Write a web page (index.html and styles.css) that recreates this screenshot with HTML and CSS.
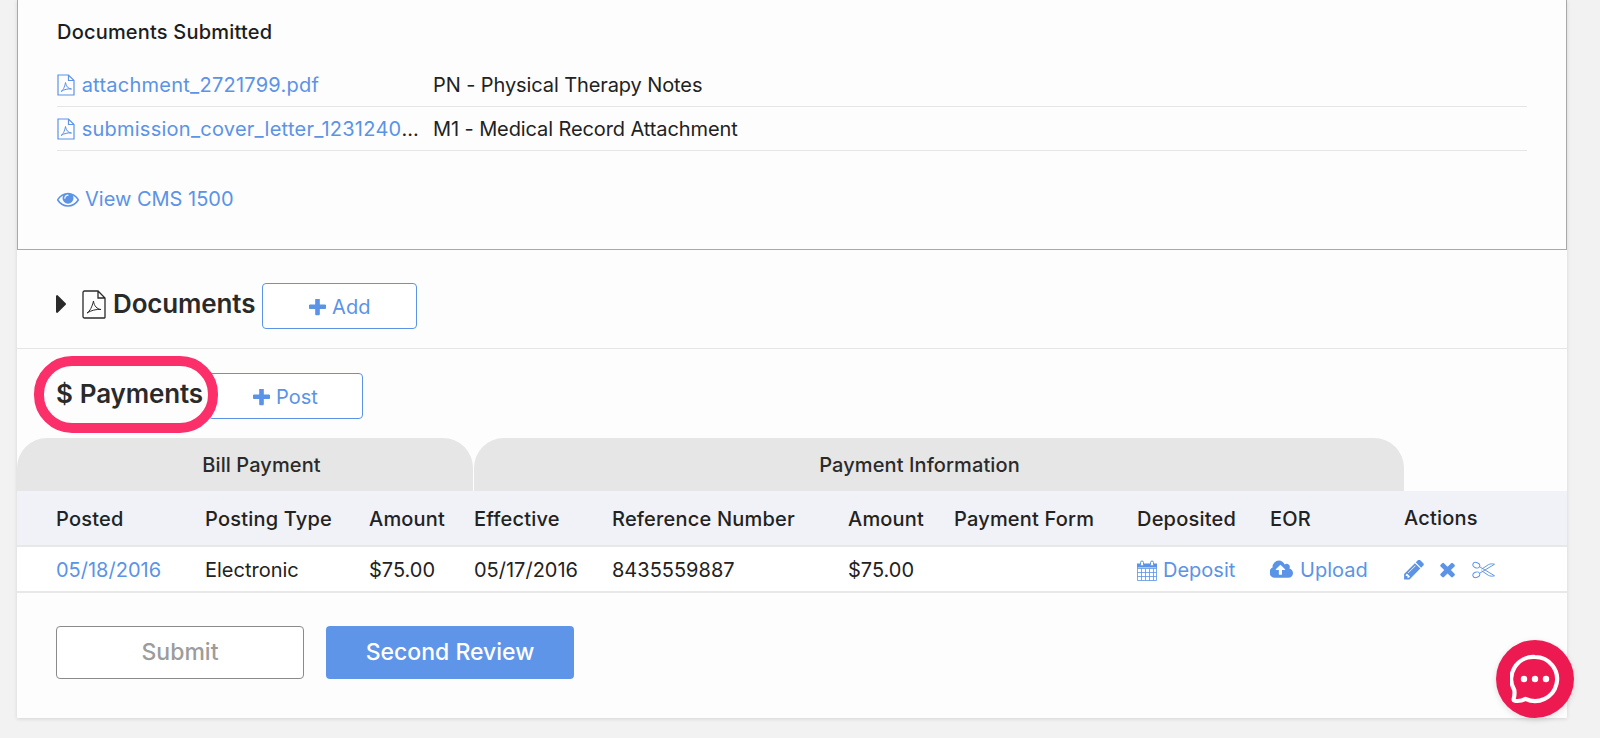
FILE: index.html
```html
<!DOCTYPE html>
<html lang="en">
<head>
<meta charset="utf-8">
<title>Claim</title>
<link rel="stylesheet" href="styles.css">
</head>
<body>
<main class="card">
  <section class="submitted">
    <h3 class="sub-title">Documents Submitted</h3>
    <div class="doc-row">
      <div class="doc-file">
        <svg class="ico-file" viewBox="0 0 18 22"><path d="M1 1h10.500L17 6.500V21H1z M11.500 1v5.500H17" fill="none" stroke="currentColor" stroke-width="1.200"/><path d="M4 17.500c2-1 3.500-4 4.500-9 .5 4 2.500 6 6 6.500-3.500-.5-7.500.5-10.500 2.500z" fill="none" stroke="currentColor" stroke-width="1"/></svg>
        <a class="link file-name">attachment_2721799.pdf</a>
      </div>
      <div class="doc-type">PN - Physical Therapy Notes</div>
    </div>
    <div class="doc-row">
      <div class="doc-file">
        <svg class="ico-file" viewBox="0 0 18 22"><path d="M1 1h10.500L17 6.500V21H1z M11.500 1v5.500H17" fill="none" stroke="currentColor" stroke-width="1.200"/><path d="M4 17.500c2-1 3.500-4 4.500-9 .5 4 2.500 6 6 6.500-3.500-.5-7.500.5-10.500 2.500z" fill="none" stroke="currentColor" stroke-width="1"/></svg>
        <a class="link file-name">submission_cover_letter_1231240</a>...
      </div>
      <div class="doc-type">M1 - Medical Record Attachment</div>
    </div>
    <a class="link view-cms">
      <svg class="ico-eye" viewBox="0 0 1792 1792"><path fill="currentColor" d="M1664 960q-152-236-381-353 61 104 61 225 0 185-131.500 316.500t-316.500 131.500-316.500-131.500-131.500-316.500q0-121 61-225-229 117-381 353 133 205 333.500 326.500t434.500 121.500 434.500-121.500 333.500-326.500zm-720-384q0-20-14-34t-34-14q-125 0-214.500 89.500t-89.500 214.500q0 20 14 34t34 14 34-14 14-34q0-86 61-147t147-61q20 0 34-14t14-34zm848 384q0 34-20 69-140 230-376.500 368.500t-499.500 138.500-499.500-139-376.500-368q-20-35-20-69t20-69q140-229 376.500-368t499.500-139 499.500 139 376.500 368q20 35 20 69z"/></svg>
      View CMS 1500
    </a>
  </section>

  <section class="documents">
    <div class="heading docs-heading">
      <svg class="ico-caret" viewBox="576 384 576 1024"><path fill="currentColor" d="M1152 896q0 26-19 45l-448 448q-19 19-45 19t-45-19-19-45v-896q0-26 19-45t45-19 45 19l448 448q19 19 19 45z"/></svg>
      <svg class="ico-file-lg" viewBox="0 0 24 29"><path d="M1 2.500A1.500 1.500 0 0 1 2.500 1H16l7 7v19.500a.5.500 0 0 1-.5.500H2.500A1.500 1.500 0 0 1 1 26.500z M16 1v7h7" fill="none" stroke="currentColor" stroke-width="1.300"/><path d="M5 23c3-2 5-6 6.500-12 .5 5 3.500 8 7.500 8.500-5-.5-10 1-14 3.500z" fill="none" stroke="currentColor" stroke-width="1"/></svg>
      <h2 class="heading-text">Documents</h2>
    </div>
    <button class="btn-outline btn-add">
      <svg class="ico-plus" viewBox="192 192 1408 1408"><path fill="currentColor" d="M1600 736v192q0 40-28 68t-68 28h-416v416q0 40-28 68t-68 28h-192q-40 0-68-28t-28-68v-416h-416q-40 0-68-28t-28-68v-192q0-40 28-68t68-28h416v-416q0-40 28-68t68-28h192q40 0 68 28t28 68v416h416q40 0 68 28t28 68z"/></svg>
      Add
    </button>
  </section>

  <section class="payments">
    <div class="heading pay-heading">
      <h2 class="heading-text"><span class="dollar">$</span>Payments</h2>
    </div>
    <button class="btn-outline btn-post">
      <svg class="ico-plus" viewBox="192 192 1408 1408"><path fill="currentColor" d="M1600 736v192q0 40-28 68t-68 28h-416v416q0 40-28 68t-68 28h-192q-40 0-68-28t-28-68v-416h-416q-40 0-68-28t-28-68v-192q0-40 28-68t68-28h416v-416q0-40 28-68t68-28h192q40 0 68 28t28 68v416h416q40 0 68 28t28 68z"/></svg>
      Post
    </button>
    <div class="highlight"></div>
  </section>

  <div class="tabs">
    <div class="tab tab-bill">Bill Payment</div>
    <div class="tab tab-info">Payment Information</div>
  </div>
  <div class="grid-row head-row">
    <div>Posted</div><div>Posting Type</div><div>Amount</div><div>Effective</div><div>Reference Number</div><div>Amount</div><div>Payment Form</div><div>Deposited</div><div>EOR</div><div class="actions-head">Actions</div>
  </div>
  <div class="grid-row data-row">
    <div class="link">05/18/2016</div>
    <div>Electronic</div>
    <div>$75.00</div>
    <div>05/17/2016</div>
    <div>8435559887</div>
    <div>$75.00</div>
    <div></div>
    <div class="link with-ico">
      <svg class="ico-cal" viewBox="0 0 20 21"><path d="M.5 4.500h19v16H.5z M.5 8.500h19 M.5 12.500h19 M.5 16.500h19 M4.500 8.500v12 M8.500 8.500v12 M12.500 8.500v12 M16.500 8.500v12" fill="none" stroke="currentColor" stroke-width=".8"/><path d="M0 3.500h20v4H0z" fill="currentColor"/><rect x="3.500" y="1" width="3" height="5" rx="1.500" fill="#fff" stroke="currentColor"/><rect x="13.500" y="1" width="3" height="5" rx="1.500" fill="#fff" stroke="currentColor"/></svg>
      Deposit
    </div>
    <div class="link with-ico">
      <svg class="ico-cloud" viewBox="0 0 1920 1792"><path fill="currentColor" d="M1216 864q0-14-9-23l-352-352q-9-9-23-9t-23 9l-351 351q-10 12-10 24 0 14 9 23t23 9h224v352q0 13 9.500 22.500t22.500 9.500h192q13 0 22.500-9.500t9.500-22.500v-352h224q13 0 22.500-9.500t9.500-22.500zm640 288q0 159-112.500 271.500t-271.500 112.500h-1088q-185 0-316.500-131.500t-131.500-316.500q0-130 70-240t188-165q-2-30-2-43 0-212 150-362t362-150q156 0 285.500 87t188.500 231q71-62 166-62 106 0 181 75t75 181q0 76-41 138 130 31 213.500 135.500t83.500 238.500z"/></svg>
      Upload
    </div>
    <div class="link action-icons">
      <svg class="ico-pencil" viewBox="120 170 1540 1540"><path fill="currentColor" d="M491 1536l91-91-235-235-91 91v107h128v128h107zm523-928q0-22-22-22-10 0-17 7l-542 542q-7 7-7 17 0 22 22 22 10 0 17-7l542-542q7-7 7-17zm-54-192l416 416-832 832h-416v-416zm683 96q0 53-37 90l-166 166-416-416 166-165q36-38 90-38 53 0 91 38l235 234q37 39 37 91z"/></svg>
      <svg class="ico-times" viewBox="200 300 1300 1300"><path fill="currentColor" d="M1490 1322q0 40-28 68l-136 136q-28 28-68 28t-68-28l-294-294-294 294q-28 28-68 28t-68-28l-136-136q-28-28-28-68t28-68l294-294-294-294q-28-28-28-68t28-68l136-136q28-28 68-28t68 28l294 294 294-294q28-28 68-28t68 28l136 136q28 28 28 68t-28 68l-294 294 294 294q28 28 28 68z"/></svg>
      <svg class="ico-scissors" viewBox="0 0 24 18"><g fill="none" stroke="currentColor" stroke-width="1"><ellipse cx="4.500" cy="4" rx="3.700" ry="2.800" transform="rotate(20 4.500 4)"/><ellipse cx="4.500" cy="14" rx="3.700" ry="2.800" transform="rotate(-20 4.500 14)"/><path d="M7.800 5.500l15.700 9.500c-2.500.8-4.500.5-6.500-.5L10 9.800 M7.800 12.500l15.700-9.500c-2.500-.8-4.500-.5-6.500.5L10 8.200"/></g></svg>
    </div>
  </div>
  <div class="footer">
    <button class="btn-submit">Submit</button>
    <button class="btn-review">Second Review</button>
  </div>
</main>
<div class="fab">
  <svg class="ico-chat" viewBox="0 0 50 50"><path d="M25 3a22 22 0 1 1-9.500 41.800c-3 1.800-7 2.500-10.500 2 -1-.2-1.500-1-1.300-2 .8-2.800 1-6 .6-8.800A22 22 0 0 1 25 3z" fill="none" stroke="#fff" stroke-width="4.200" stroke-linejoin="round"/><circle cx="14" cy="25" r="3.200" fill="#fff"/><circle cx="25" cy="25" r="3.200" fill="#fff"/><circle cx="36" cy="25" r="3.200" fill="#fff"/></svg>
</div>
</body>
</html>
```
FILE: styles.css
```css
* { box-sizing: border-box; }
html, body { margin: 0; height: 738px; overflow: hidden; }
body {
  background: #f2f2f2;
  font-family: Inter, "Liberation Sans", sans-serif;
  font-size: 20px;
  color: #222;
  position: relative;
}
h2, h3 { margin: 0; }
.link { color: #5b93e6; }

.card {
  margin-left: 17px;
  width: 1550px;
  height: 718px;
  background: #fdfdfd;
  box-shadow: 0 1px 4px rgba(0,0,0,.12);
}

.submitted {
  height: 250px;
  padding: 19px 39px 0 39px;
  border: 1px solid #a9a9a9;
  border-top: 0;
}
.sub-title { font-size: 20px; line-height: 26px; font-weight: 500; color: #1d1d1d; letter-spacing: .2px; margin-bottom: 18px; }
.doc-row {
  display: flex;
  height: 44px;
  padding-top: 9px;
  border-bottom: 1px solid #e6e6e6;
  line-height: 26px;
}
.doc-file {
  width: 366px;
  margin-right: 10px;
  white-space: nowrap;
}
.doc-type { letter-spacing: -.1px; }
.file-name { letter-spacing: .25px; }
.ico-file { width: 18px; height: 22px; color: #5b93e6; vertical-align: -4px; margin-right: 1px; }
.view-cms { display: flex; align-items: center; gap: 6px; margin-top: 35px; line-height: 26px; }
.ico-eye { width: 22px; height: 22px; }

.documents {
  position: relative;
  height: 99px;
  display: flex;
  align-items: flex-start;
  padding-top: 33px;
  padding-left: 39px;
  border-bottom: 1px solid #e6e6e6;
}
.heading { display: flex; align-items: center; padding-top: 2px; color: #2a2a2a; }
.docs-heading { height: 40px; }
.heading-text { font-size: 26px; font-weight: 600; letter-spacing: -.15px; line-height: 40px; white-space: nowrap; }
.ico-caret { width: 10px; height: 18px; margin-right: 16px; }
.ico-file-lg { width: 24px; height: 29px; margin-right: 7px; }
.btn-outline {
  display: flex;
  align-items: center;
  justify-content: center;
  gap: 6px;
  width: 155px;
  height: 46px;
  padding: 2px 0 0;
  background: #fff;
  border: 1px solid #5b93e6;
  border-radius: 4px;
  color: #5b93e6;
  font: inherit;
}
.btn-add { margin-left: 7px; }
.ico-plus { width: 17px; height: 17px; }

.payments {
  position: relative;
  height: 89px;
  display: flex;
  align-items: flex-start;
  padding-top: 24px;
  padding-left: 39px;
}
.pay-heading { height: 40px; width: 152px; }
.dollar { margin-right: 7px; }
.highlight {
  position: absolute;
  left: 17px;
  top: 7px;
  width: 184px;
  height: 77px;
  border: 10px solid #fb2f69;
  border-radius: 38px;
}

.tabs { display: flex; gap: 1px; height: 53px; }
.tab {
  display: flex;
  align-items: center;
  justify-content: center;
  padding-top: 1px;
  background: #e6e6e6;
  border-radius: 30px 30px 0 0;
  font-weight: 500;
  letter-spacing: .1px;
  color: #2a2a2a;
}
.tab-bill { width: 456px; padding-left: 33px; }
.tab-info { width: 930px; padding-right: 39px; }

.grid-row {
  display: grid;
  grid-template-columns: 149px 164px 105px 138px 236px 106px 183px 133px 134px 1fr;
  padding-left: 39px;
  align-items: center;
  border-bottom: 2px solid #e8e8e8;
}
.head-row { height: 56px; padding-top: 2px; background: #f0f2f7; font-weight: 500; letter-spacing: .2px; color: #222; }
.actions-head { margin-top: -3px; }
.data-row { height: 46px; padding-top: 2px; background: #fff; }
.with-ico { display: flex; align-items: center; gap: 6px; }
.ico-cal { width: 20px; height: 21px; }
.ico-cloud { width: 24px; height: 22px; }
.action-icons { display: flex; align-items: center; }
.ico-pencil { width: 20px; height: 20px; margin-right: 15px; }
.ico-times { width: 16px; height: 16px; margin-right: 17px; }
.ico-scissors { width: 23px; height: 18px; }

.footer { display: flex; gap: 22px; padding: 33px 0 0 39px; }
.btn-submit, .btn-review {
  width: 248px;
  height: 53px;
  padding: 0 0 2px;
  border-radius: 4px;
  font: inherit;
  font-size: 23px;
  font-weight: 500;
}
.btn-submit { background: #fff; border: 1px solid #8a8a8a; color: #9c9c9c; }
.btn-review { background: #5f95e8; border: 0; color: #fff; }

.fab {
  position: absolute;
  left: 1496px;
  top: 640px;
  width: 78px;
  height: 78px;
  border-radius: 50%;
  background: #ed1a52;
  box-shadow: 0 2px 6px rgba(0,0,0,.12);
  display: flex;
  align-items: center;
  justify-content: center;
}
.ico-chat { width: 50px; height: 50px; }
```
